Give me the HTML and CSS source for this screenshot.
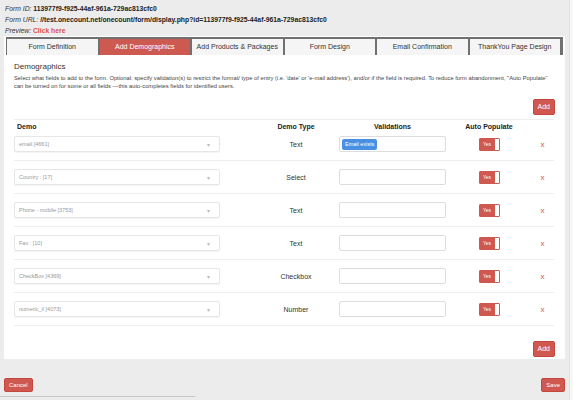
FILE: index.html
```html
<!DOCTYPE html>
<html>
<head>
<meta charset="utf-8">
<link rel="stylesheet" href="styles.css">
</head>
<body>
<div class="page">
  <div class="meta">
    <div><span class="lbl">Form ID:</span> <b>113977f9-f925-44af-961a-729ac813cfc0</b></div>
    <div><span class="lbl">Form URL:</span> <b>//test.onecount.net/onecount/form/display.php?id=113977f9-f925-44af-961a-729ac813cfc0</b></div>
    <div><span class="lbl">Preview:</span> <b class="link">Click here</b></div>
  </div>
  <div class="panel">
    <div class="tabs">
      <div class="tab">Form Definition</div>
      <div class="tab active">Add Demographics</div>
      <div class="tab">Add Products &amp; Packages</div>
      <div class="tab">Form Design</div>
      <div class="tab">Email Confirmation</div>
      <div class="tab last">ThankYou Page Design</div>
    </div>
    <div class="content">
      <h2 class="title">Demographics</h2>
      <p class="desc">Select what fields to add to the form. Optional: specify validation(s) to restrict the format/ type of entry (i.e. 'date' or 'e-mail address'), and/or if the field is required. To reduce form abandonment, "Auto Populate" can be turned on for some or all fields —this auto-completes fields for identified users.</p>
      <div class="actions"><button class="btn">Add</button></div>
      <table class="grid">
        <colgroup><col class="c1"><col class="c2"><col class="c3"><col class="c4"><col class="c5"></colgroup>
        <thead>
          <tr><th class="left">Demo</th><th>Demo Type</th><th>Validations</th><th>Auto Populate</th><th></th></tr>
        </thead>
        <tbody>
          <tr>
            <td><div class="sel"><span>email [4661]</span><i>▾</i></div></td>
            <td class="ctr">Text</td>
            <td class="ctr"><div class="inp"><span class="pill">Email exists</span></div></td>
            <td class="ctr"><div class="sw"><span>Yes</span><i></i></div></td>
            <td class="ctr"><span class="del">x</span></td>
          </tr>
          <tr>
            <td><div class="sel"><span>Country : [17]</span><i>▾</i></div></td>
            <td class="ctr">Select</td>
            <td class="ctr"><div class="inp"></div></td>
            <td class="ctr"><div class="sw"><span>Yes</span><i></i></div></td>
            <td class="ctr"><span class="del">x</span></td>
          </tr>
          <tr>
            <td><div class="sel"><span>Phone - mobile [3753]</span><i>▾</i></div></td>
            <td class="ctr">Text</td>
            <td class="ctr"><div class="inp"></div></td>
            <td class="ctr"><div class="sw"><span>Yes</span><i></i></div></td>
            <td class="ctr"><span class="del">x</span></td>
          </tr>
          <tr>
            <td><div class="sel"><span>Fax : [10]</span><i>▾</i></div></td>
            <td class="ctr">Text</td>
            <td class="ctr"><div class="inp"></div></td>
            <td class="ctr"><div class="sw"><span>Yes</span><i></i></div></td>
            <td class="ctr"><span class="del">x</span></td>
          </tr>
          <tr>
            <td><div class="sel"><span>CheckBox [4369]</span><i>▾</i></div></td>
            <td class="ctr">Checkbox</td>
            <td class="ctr"><div class="inp"></div></td>
            <td class="ctr"><div class="sw"><span>Yes</span><i></i></div></td>
            <td class="ctr"><span class="del">x</span></td>
          </tr>
          <tr>
            <td><div class="sel"><span>numeric_ll [4073]</span><i>▾</i></div></td>
            <td class="ctr">Number</td>
            <td class="ctr"><div class="inp"></div></td>
            <td class="ctr"><div class="sw"><span>Yes</span><i></i></div></td>
            <td class="ctr"><span class="del">x</span></td>
          </tr>
        </tbody>
      </table>
      <div class="actions bottom"><button class="btn">Add</button></div>
    </div>
  </div>
  <div class="footer">
    <button class="btn sm">Cancel</button>
    <button class="btn sm">Save</button>
  </div>
  <div class="hline"></div>
</div>
<div class="track"></div>
</body>
</html>
```

FILE: styles.css
```css
* { box-sizing: border-box; }
html, body { margin: 0; padding: 0; }
body {
  background: #ececec;
  font-family: "Liberation Sans", Arial, sans-serif;
  color: #333;
  display: flex;
  height: 400px;
  overflow: hidden;
}
.page { flex: 1; min-width: 0; }
.track { width: 4px; background: #f6f6f6; border-left: 1px solid #e2e2e2; }

.meta {
  padding: 3px 5px 0;
  font-size: 6.8px;
  line-height: 11px;
  color: #222;
}
.meta .lbl { font-style: italic; color: #333; }
.meta b { font-weight: bold; }
.meta .link { color: #d9534f; }

.panel {
  background: #fff;
  margin: 0 4px 0 4px;
  padding: 1px 2px 2px 2px;
}
.tabs { display: flex; }
.tab {
  flex: 1;
  text-align: center;
  font-size: 7px;
  line-height: 15px;
  height: 18px;
  background: #f5f5f5;
  color: #333;
  border-top: 2px solid #707070;
  border-left: 1px solid #707070;
  border-right: 1px solid #707070;
  white-space: nowrap;
}
.tab.active { background: #cd5a51; color: #fff; }
.tab.last { border-right: 3px solid #707070; }

.content { padding: 0 7px 0 8px; }
.title {
  font-size: 8px;
  font-weight: normal;
  line-height: 10px;
  margin: 7px 0 2px;
  color: #333;
}
.desc {
  font-size: 5.8px;
  line-height: 8px;
  margin: 0;
  color: #444;
}
.actions { display: flex; justify-content: flex-end; margin-top: 9px; padding-right: 1px; }
.actions.bottom { margin-top: 15px; }
.btn {
  font-family: "Liberation Sans", Arial, sans-serif;
  background: #cf5850;
  color: #fff;
  border: 1px solid #c4463d;
  border-radius: 2px;
  font-size: 7px;
  height: 16px;
  padding: 0 4px;
  line-height: 14px;
}
.btn.sm { font-size: 6px; height: 14px; line-height: 12px; padding: 0 4px; }

.grid {
  width: 540px;
  table-layout: fixed;
  border-collapse: collapse;
  margin-top: 4px;
  border-top: 1px solid #eee;
}
.c1 { width: 245px; }
.c2 { width: 74px; }
.c3 { width: 119px; }
.c4 { width: 74px; }
.c5 { width: 28px; }
.grid th {
  font-size: 7px;
  font-weight: bold;
  line-height: 8px;
  padding: 3px 0 1px;
  text-align: center;
  color: #222;
}
.grid th.left { text-align: left; padding-left: 3px; }
.grid td {
  padding: 8px 0;
  border-bottom: 1px solid #eee;
  font-size: 7px;
  vertical-align: middle;
  height: 33px;
  color: #333;
}
.grid tbody tr:first-child td { padding-top: 4px; height: 28px; }
.grid td.ctr { text-align: center; }
.grid td.ctr:last-child { padding-left: 5px; }

.sel {
  width: 206px;
  height: 16px;
  border: 1px solid #e6e6e6;
  border-radius: 2px;
  box-shadow: 0 1px 1px rgba(0,0,0,0.05);
  display: flex;
  align-items: center;
  justify-content: space-between;
  padding: 0 9px 0 4px;
  font-size: 5.5px;
  color: #999;
}
.sel i { font-style: normal; color: #bbb; font-size: 6px; }

.inp {
  width: 107px;
  height: 16px;
  margin: 0 auto;
  border: 1px solid #ddd;
  border-radius: 2px;
  display: flex;
  align-items: center;
  padding-left: 2px;
}
.pill {
  background: #4a90e2;
  color: #fff;
  font-size: 5.5px;
  line-height: 11px;
  height: 11px;
  padding: 0 3px;
  border-radius: 2px;
}

.sw {
  display: inline-flex;
  width: 21px;
  height: 13px;
  border: 1px solid #cf5850;
  border-radius: 1px;
  vertical-align: middle;
  overflow: hidden;
}
.sw span {
  flex: 1;
  background: #cf5850;
  color: #fff;
  font-size: 5px;
  line-height: 11px;
  text-align: center;
}
.sw i { width: 4px; background: #fff; }

.del { color: #d9534f; font-size: 8px; }

.footer {
  display: flex;
  justify-content: space-between;
  margin: 19px 4px 0 4px;
}
.hline { width: 195px; height: 1px; background: #c8c8c8; margin-top: 4px; }
```
